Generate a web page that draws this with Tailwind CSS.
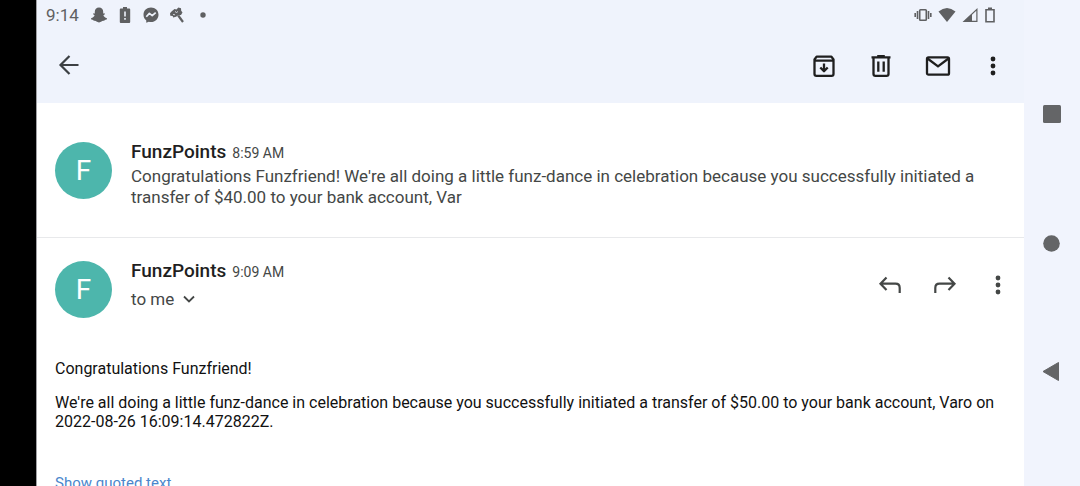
<!DOCTYPE html>
<html lang="en">
<head>
<meta charset="utf-8">
<meta name="viewport" content="width=device-width, initial-scale=1">
<title>FunzPoints</title>
<script src="https://cdn.jsdelivr.net/npm/@tailwindcss/browser@4"></script>
</head>
<body class="flex h-screen overflow-hidden bg-white font-['Roboto',sans-serif] text-[#444746]">
<div class="w-9 shrink-0 bg-black"></div>
<div class="flex min-w-0 flex-1 flex-col overflow-hidden border-l border-[#a0a0a4]">
  <header class="shrink-0 bg-[#eff3fc] pb-[15px]">
    <div class="flex h-7 items-center justify-between pr-7 pl-[9px] pt-px text-[#5f6062]">
      <div class="flex items-center gap-2.5">
        <span class="mr-0.5 text-[17px] leading-7">9:14</span>
        <svg class="h-4 w-4" viewBox="0 0 16 16" fill="currentColor"><path d="M8 .5c2.600 0 4.200 1.700 4.200 4.200v1.800l1.400-.2.300.9-1.500 1c.5 1.500 1.600 2.400 3.600 3l-.3 1.200-2.100.5-.4 1c-1.500-.4-2 .1-2.700.7-1.300 1.100-3.700 1.100-5 0-.7-.6-1.200-1.100-2.700-.7l-.4-1-2.100-.5L0 11.200c2-.6 3.100-1.500 3.600-3l-1.500-1 .3-.9 1.400.2V4.700C3.800 2.200 5.400.5 8 .5z"/></svg>
        <svg class="h-4 w-4" viewBox="0 0 16 16" fill="currentColor"><path fill-rule="evenodd" d="M6 0h4v1.500h2.300q.9 0 .9.900v12.700q0 .9-.9.900H3.700q-.9 0-.9-.9V2.400q0-.9.900-.9H6zM7.200 4.500v5h1.600v-5zM7.200 11v1.700h1.600V11z"/></svg>
        <svg class="h-4 w-4" viewBox="0 0 16 16" fill="currentColor"><path d="M8 .5c4.300 0 7.500 3.100 7.500 7.200S12.300 15 8 15c-.8 0-1.500-.1-2.200-.3L3.300 15.800l-.1-2.500C1.500 12 .5 10 .5 7.700.5 3.600 3.700.5 8 .5z"/><path d="M3.300 9.800 6.400 6.400 9.200 8.600 12.700 5.600" fill="none" stroke="#eff3fc" stroke-width="1.700" stroke-linejoin="round"/></svg>
        <svg class="h-4 w-4" viewBox="0 0 16 16" fill="currentColor"><path d="M2.500 4.500 5.500 2l2 .5L9.300.5l2.700.7.2 2.500 1.300 1.700-1.500 2.600-2.600.2-2.400 1.600-2.900.7L3.700 9 1.300 8.700 1 6.300z"/><path d="M9.200 8.500 14 15" stroke="currentColor" stroke-width="2.200"/><path d="m6 4.500 1.500 1 1.500-1M4 7.500l2 .3" stroke="#eff3fc" stroke-width=".8" fill="none"/></svg>
        <svg class="h-4 w-4" viewBox="0 0 16 16" fill="currentColor"><circle cx="8" cy="8" r="2.700"/></svg>
      </div>
      <div class="flex items-center gap-1.5">
        <svg class="h-4 w-[18px]" viewBox="0 0 18 16" fill="none" stroke="currentColor" stroke-width="1.600"><rect x="5.700" y="2.700" width="6.600" height="10.600" rx=".8"/><path d="M3.500 4v8M1.200 6v4M14.500 4v8M16.800 6v4"/></svg>
        <svg class="h-4 w-[18px]" viewBox="0 0 18 16" fill="currentColor"><path d="M.5 4.500Q9-2.500 17.500 4.500L9 15z"/></svg>
        <svg class="h-4 w-4" viewBox="0 0 16 16" fill="currentColor"><path fill-rule="evenodd" d="M15.500 1v14H.5zM10 7.800V13.800h4.300V3.700z"/></svg>
        <svg class="h-4 w-3" viewBox="0 0 12 16" fill="none" stroke="currentColor" stroke-width="1.600"><path d="M2 2.700h8v12H2z"/><path d="M4 1.300h4"/></svg>
      </div>
    </div>
    <div class="flex h-[60px] items-center justify-between pt-4 pr-[19px] pl-[18px] text-[#1f1f1f]">
      <button type="button" aria-label="Back"><svg class="h-7 w-7" viewBox="0 0 28 28" fill="none" stroke="#3c4043" stroke-width="2.200"><path d="M23.500 13H5.500M14.500 4l-9 9 9 9"/></svg></button>
      <div class="flex items-center gap-[29px]">
        <button type="button" aria-label="Archive"><svg class="h-7 w-7" viewBox="0 0 28 28" fill="none" stroke="currentColor" stroke-width="2.300" stroke-linejoin="round"><path d="M4.500 7.500V22q0 1.900 1.900 1.900h15.200q1.900 0 1.900-1.900V7.500L21.400 4.600H6.600zM4.500 8.700h19"/><path d="M14 11.500v7.500M10.300 15.500l3.700 3.700 3.700-3.700"/></svg></button>
        <button type="button" aria-label="Delete"><svg class="h-7 w-7" viewBox="0 0 28 28" fill="none" stroke="currentColor" stroke-width="2.300"><path d="M4.500 5.400h19M10.200 4.200h7.600M6.500 5.500V22q0 1.900 1.900 1.900h11.200q1.900 0 1.900-1.900V5.500M11.300 9.500v10.300M16.700 9.500v10.300"/></svg></button>
        <button type="button" aria-label="Mark as unread"><svg class="h-7 w-7" viewBox="0 0 28 28" fill="none" stroke="currentColor" stroke-width="2.300"><rect x="3" y="5.300" width="22" height="17.400" rx="1.500"/><path d="m3.500 6.500 10.500 7.800L24.500 6.500"/></svg></button>
        <button type="button" aria-label="More options"><svg class="h-7 w-6" viewBox="0 0 24 28" fill="currentColor"><circle cx="12" cy="7" r="2.400"/><circle cx="12" cy="14" r="2.400"/><circle cx="12" cy="21" r="2.400"/></svg></button>
      </div>
    </div>
  </header>
  <main>
    <article class="flex h-[135px] gap-[19px] border-b border-[#e8e9eb] px-[18px] pt-[39px]">
      <div class="flex h-[57px] w-[57px] shrink-0 items-center justify-center rounded-full bg-[#4db6ac] text-[28px] text-white">F</div>
      <div class="-mt-0.5 min-w-0">
        <div class="flex items-baseline gap-1.5"><h2 class="text-[19px] leading-6 font-medium text-[#1f1f1f]">FunzPoints</h2><time class="text-sm">8:59 AM</time></div>
        <p class="mt-0.5 text-[17px] leading-[21px]">Congratulations Funzfriend! We're all doing a little funz-dance in celebration because you successfully initiated a transfer of $40.00 to your bank account, Var</p>
      </div>
    </article>
    <article class="pt-[23px]">
      <div class="flex gap-[19px] pr-3.5 pl-[18px]">
        <div class="flex h-[57px] w-[57px] shrink-0 items-center justify-center rounded-full bg-[#4db6ac] text-[28px] text-white">F</div>
        <div class="-mt-0.5 min-w-0 flex-1">
          <div class="flex items-baseline gap-1.5"><h2 class="text-[19px] leading-6 font-medium text-[#1f1f1f]">FunzPoints</h2><time class="text-sm">9:09 AM</time></div>
          <button type="button" class="mt-1 flex items-center gap-2 text-[17px] leading-6">to me <svg class="h-3.5 w-3.5" viewBox="0 0 14 14" fill="none" stroke="currentColor" stroke-width="1.800"><path d="m2 4.500 5 5 5-5"/></svg></button>
        </div>
        <div class="flex h-12 items-center gap-[27px]">
          <button type="button" aria-label="Reply"><svg class="h-7 w-7" viewBox="0 0 28 28" fill="none" stroke="currentColor" stroke-width="2.200"><path d="M10.500 6.500 4.500 12.700l6 6.200M4.500 12.700h15q4.200 0 4.200 4.200V22"/></svg></button>
          <button type="button" aria-label="Forward"><svg class="h-7 w-7" viewBox="0 0 28 28" fill="none" stroke="currentColor" stroke-width="2.200"><path d="m17.500 6.500 6 6.200-6 6.200M23.500 12.700h-15q-4.200 0-4.200 4.200V22"/></svg></button>
          <button type="button" aria-label="More message options"><svg class="h-7 w-6" viewBox="0 0 24 28" fill="currentColor"><circle cx="12" cy="7" r="2.400"/><circle cx="12" cy="14" r="2.400"/><circle cx="12" cy="21" r="2.400"/></svg></button>
        </div>
      </div>
      <div class="px-[18px] pt-[41px] text-base leading-[19px] text-[#111111]">
        <p>Congratulations Funzfriend!</p>
        <p class="mt-[15px]">We're all doing a little funz-dance in celebration because you successfully initiated a transfer of $50.00 to your bank account, Varo on 2022-08-26 16:09:14.472822Z.</p>
        <a href="#" class="mt-[43px] block text-[15px] text-[#4a86cc]">Show quoted text</a>
      </div>
    </article>
  </main>
</div>
<nav class="flex w-14 shrink-0 flex-col items-center gap-[102px] bg-[#f1f4fd] pt-[100px] text-[#646567]" aria-label="System navigation">
  <button type="button" aria-label="Recent apps"><svg class="h-7 w-7" viewBox="0 0 28 28" fill="currentColor"><rect x="5" y="5" width="18" height="18" rx="1.500"/></svg></button>
  <button type="button" aria-label="Home"><svg class="h-7 w-7" viewBox="0 0 28 28" fill="currentColor"><circle cx="13.500" cy="13.500" r="8.300"/></svg></button>
  <button type="button" aria-label="Back to previous app"><svg class="h-7 w-7" viewBox="0 0 28 28" fill="currentColor" stroke="currentColor" stroke-linejoin="round"><path d="M5 11.500 20.500 2.500v18z"/></svg></button>
</nav>
</body>
</html>
